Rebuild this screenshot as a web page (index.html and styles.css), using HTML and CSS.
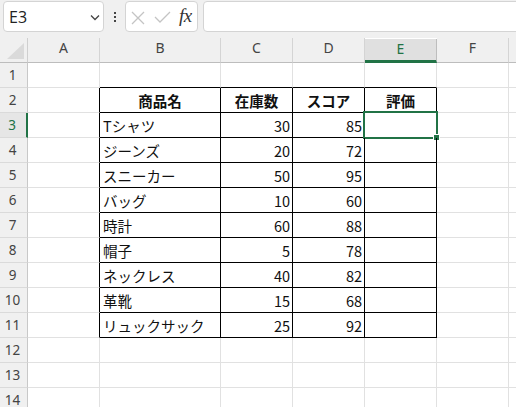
FILE: index.html
```
<!DOCTYPE html>
<html lang="ja">
<head>
<meta charset="utf-8">
<link rel="stylesheet" href="styles.css">
</head>
<body>
<div class="app">
  <div class="toolbar">
    <div class="namebox">
      <span class="nb-text">E3</span>
      <svg class="chev" width="10" height="7" viewBox="0 0 10 7"><path d="M1 1.5 L5 5.5 L9 1.5" fill="none" stroke="#444" stroke-width="1.3"/></svg>
    </div>
    <div class="dots"><i></i><i></i><i></i></div>
    <div class="fxbox">
      <svg class="ic-x" width="14" height="14" viewBox="0 0 14 14"><path d="M1 1 L13 13 M13 1 L1 13" stroke="#c4c4c4" stroke-width="1.3" fill="none"/></svg>
      <svg class="ic-ok" width="17" height="12" viewBox="0 0 17 12"><path d="M1 6 L6 11 L16 1" stroke="#c4c4c4" stroke-width="1.3" fill="none"/></svg>
      <span class="fx">fx</span>
    </div>
    <div class="formula"></div>
  </div>

  <div class="sheet">
    <div class="corner"><svg width="17" height="16" viewBox="0 0 17 16"><polygon points="17,0 17,16 0,16" fill="#dadada"/></svg></div>
    <div class="h">A</div>
    <div class="h">B</div>
    <div class="h">C</div>
    <div class="h">D</div>
    <div class="h sel">E</div>
    <div class="h">F</div>
    <div class="h last"></div>

    <div class="rh">1</div>
    <div class="c"></div>
    <div class="c top"></div>
    <div class="c top"></div>
    <div class="c top"></div>
    <div class="c top"></div>
    <div class="c"></div>
    <div class="c"></div>

    <div class="rh">2</div>
    <div class="c lefty"></div>
    <div class="t hd">商品名</div>
    <div class="t hd">在庫数</div>
    <div class="t hd">スコア</div>
    <div class="t hd">評価</div>
    <div class="c"></div>
    <div class="c"></div>

    <div class="rh rsel">3</div>
    <div class="c lefty"></div>
    <div class="t">Tシャツ</div>
    <div class="t num">30</div>
    <div class="t num">85</div>
    <div class="t active"><div class="selbox"><span class="handle"></span></div></div>
    <div class="c"></div>
    <div class="c"></div>

    <div class="rh">4</div>
    <div class="c lefty"></div>
    <div class="t">ジーンズ</div>
    <div class="t num">20</div>
    <div class="t num">72</div>
    <div class="t"></div>
    <div class="c"></div>
    <div class="c"></div>

    <div class="rh">5</div>
    <div class="c lefty"></div>
    <div class="t">スニーカー</div>
    <div class="t num">50</div>
    <div class="t num">95</div>
    <div class="t"></div>
    <div class="c"></div>
    <div class="c"></div>

    <div class="rh">6</div>
    <div class="c lefty"></div>
    <div class="t">バッグ</div>
    <div class="t num">10</div>
    <div class="t num">60</div>
    <div class="t"></div>
    <div class="c"></div>
    <div class="c"></div>

    <div class="rh">7</div>
    <div class="c lefty"></div>
    <div class="t">時計</div>
    <div class="t num">60</div>
    <div class="t num">88</div>
    <div class="t"></div>
    <div class="c"></div>
    <div class="c"></div>

    <div class="rh">8</div>
    <div class="c lefty"></div>
    <div class="t">帽子</div>
    <div class="t num">5</div>
    <div class="t num">78</div>
    <div class="t"></div>
    <div class="c"></div>
    <div class="c"></div>

    <div class="rh">9</div>
    <div class="c lefty"></div>
    <div class="t">ネックレス</div>
    <div class="t num">40</div>
    <div class="t num">82</div>
    <div class="t"></div>
    <div class="c"></div>
    <div class="c"></div>

    <div class="rh">10</div>
    <div class="c lefty"></div>
    <div class="t">革靴</div>
    <div class="t num">15</div>
    <div class="t num">68</div>
    <div class="t"></div>
    <div class="c"></div>
    <div class="c"></div>

    <div class="rh">11</div>
    <div class="c lefty"></div>
    <div class="t">リュックサック</div>
    <div class="t num">25</div>
    <div class="t num">92</div>
    <div class="t"></div>
    <div class="c"></div>
    <div class="c"></div>

    <div class="rh">12</div>
    <div class="c"></div><div class="c"></div><div class="c"></div><div class="c"></div><div class="c"></div><div class="c"></div><div class="c"></div>
    <div class="rh">13</div>
    <div class="c"></div><div class="c"></div><div class="c"></div><div class="c"></div><div class="c"></div><div class="c"></div><div class="c"></div>
    <div class="rh">14</div>
    <div class="c"></div><div class="c"></div><div class="c"></div><div class="c"></div><div class="c"></div><div class="c"></div><div class="c"></div>
  </div>
</div>
</body>
</html>
```

FILE: styles.css
```
* { box-sizing: border-box; }
html, body { margin: 0; padding: 0; }
body {
  width: 516px;
  height: 407px;
  overflow: hidden;
  background: #f0f0f0;
  font-family: "Noto Sans CJK JP", "Noto Sans", sans-serif;
}
.app { width: 516px; }

.toolbar {
  height: 38px;
  display: flex;
  align-items: flex-start;
  padding-top: 1px;
  padding-left: 3px;
  background: #f0f0f0;
}
.toolbar > * { flex: none; }
.namebox {
  width: 101px;
  height: 31px;
  background: #fff;
  border: 1px solid #d4d4d4;
  border-radius: 4px;
  display: flex;
  align-items: center;
  justify-content: space-between;
  padding: 0 3px 0 5px;
}
.nb-text {
  font-family: "Open Sans", "Noto Sans", sans-serif;
  font-size: 16px;
  color: #222;
  line-height: 1;
  padding-top: 1px;
}
.chev { margin-top: 2px; }
.dots {
  width: 21px;
  height: 31px;
  display: flex;
  flex-direction: column;
  align-items: center;
  justify-content: center;
  gap: 2px;
}
.dots i {
  display: block;
  width: 2px;
  height: 2px;
  background: #444;
}
.fxbox {
  width: 73px;
  height: 31px;
  background: #fff;
  border: 1px solid #d4d4d4;
  border-radius: 4px;
  display: flex;
  align-items: center;
  padding-left: 4px;
}
.ic-x { margin-left: 1px; margin-top: 2px; flex: none; }
.ic-ok { margin-left: 9px; margin-top: 1px; flex: none; }
.fx {
  margin-left: 8px;
  font-family: "Liberation Serif", "DejaVu Serif", serif;
  font-style: italic;
  font-size: 19px;
  color: #333;
  line-height: 1;
  letter-spacing: -0.5px;
  margin-top: -2px;
}
.formula {
  margin-left: 5px;
  width: 330px;
  height: 31px;
  background: #fff;
  border: 1px solid #d4d4d4;
  border-radius: 4px;
}

.sheet {
  display: grid;
  grid-template-columns: 28px 72px 121px 72px 72px 72px 72px 20px;
  grid-auto-rows: 25px;
  background: #fff;
}
.corner {
  background: #f0f0f0;
  border-right: 1px solid #cfcfcf;
  border-bottom: 1px solid #bdbdbd;
  display: flex;
  align-items: flex-end;
  justify-content: flex-end;
  padding: 0 3px 3px 0;
}
.h {
  background: #f0f0f0;
  border-right: 1px solid #d4d4d4;
  border-bottom: 1px solid #bdbdbd;
  display: flex;
  align-items: center;
  justify-content: center;
  padding-bottom: 6px;
  font-family: "Noto Sans", "Open Sans", sans-serif;
  font-size: 14px;
  color: #444;
  position: relative;
}
.h.sel {
  margin-top: 1px;
  background: #e0e0e0;
  border-bottom: 3px solid #217346;
  border-right: 1px solid #bdbdbd;
  color: #217346;
  padding-bottom: 3px;
}
.h.last { border-right: none; }
.rh {
  background: #f0f0f0;
  border-right: 1px solid #c8c8c8;
  border-bottom: 1px solid #dadada;
  display: flex;
  align-items: center;
  justify-content: center;
  font-family: "Noto Sans", "Open Sans", sans-serif;
  font-size: 13.5px;
  color: #444;
  padding-right: 2px;
}
.rh.rsel {
  background: #e6e6e6;
  border-right: 2px solid #217346;
  color: #217346;
}
.c {
  border-right: 1px solid #e1e1e1;
  border-bottom: 1px solid #e1e1e1;
}
.c.top { border-bottom-color: #000; }
.c.lefty { border-right-color: #000; }
.t {
  border-right: 1px solid #000;
  border-bottom: 1px solid #000;
  font-size: 14.5px;
  color: #111;
  display: flex;
  align-items: center;
  padding: 1px 3px 0 3px;
  white-space: nowrap;
  position: relative;
}
.t.hd {
  font-weight: bold;
  justify-content: center;
}
.t.num {
  justify-content: flex-end;
  padding-right: 2px;
}
.selbox {
  position: absolute;
  left: -2px;
  top: -2px;
  right: -2px;
  bottom: -2px;
  border: 2px solid #217346;
}
.handle {
  position: absolute;
  right: -4px;
  bottom: -4px;
  width: 7px;
  height: 7px;
  background: #217346;
  border: 1px solid #fff;
}
```
